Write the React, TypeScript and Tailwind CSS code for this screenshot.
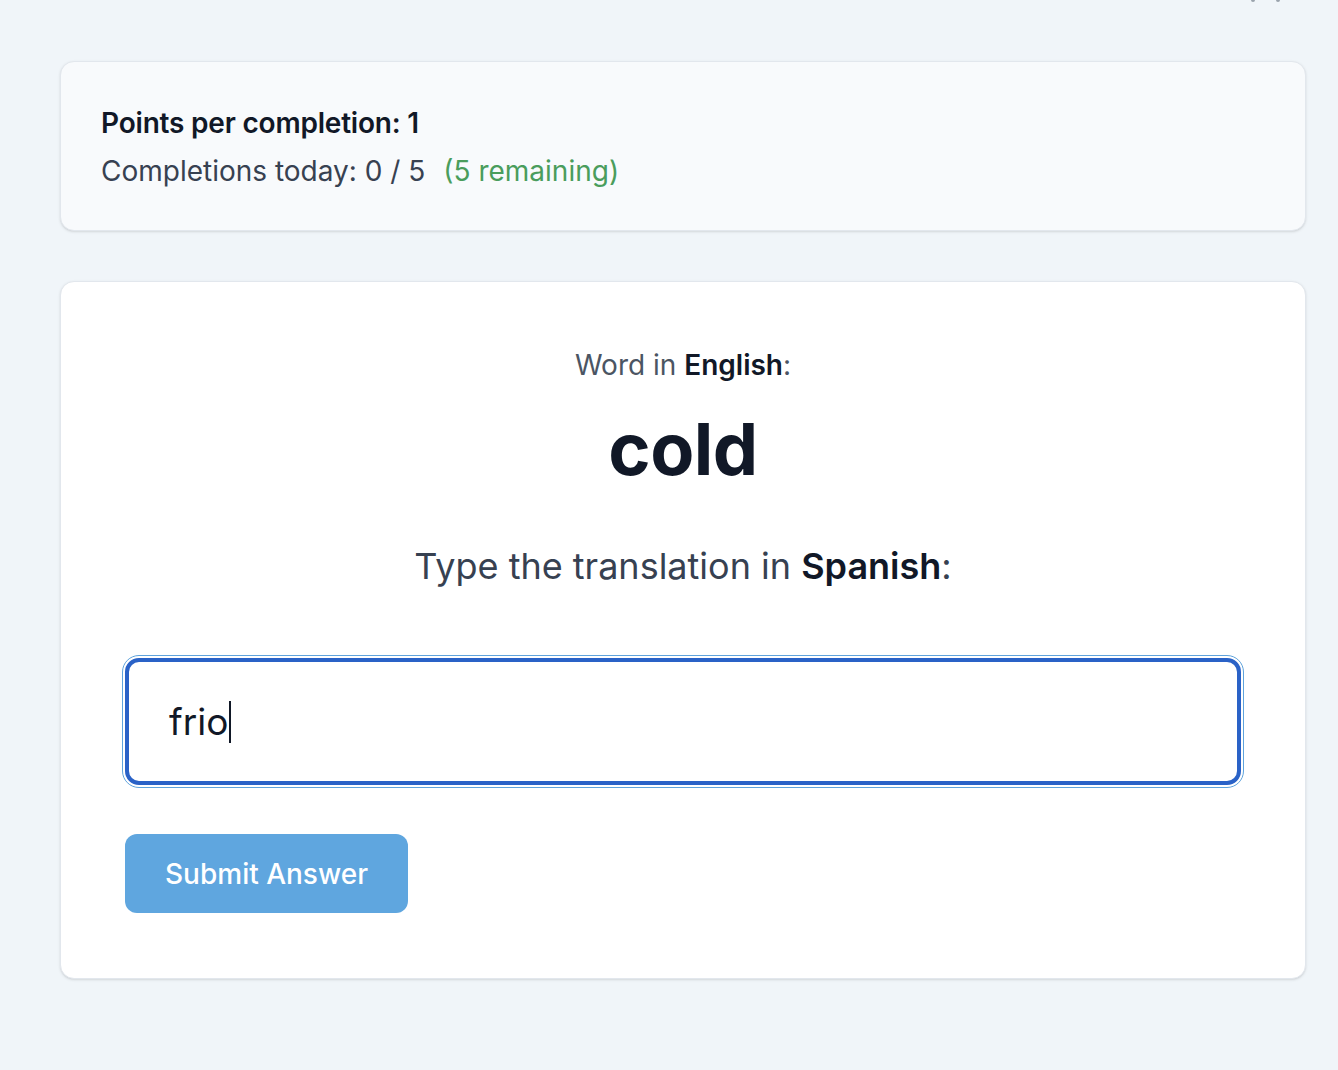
import { useState } from 'react';

export default function App() {
  const [answer] = useState('frio');

  return (
    <div
      className="min-h-screen w-full bg-[#f0f5f9] text-[#111827]"
      style={{ fontFamily: 'Inter, "Noto Sans", Arial, sans-serif' }}
    >
      {/* bits of the header cut off at the top edge */}
      <div className="flex h-[2px] justify-end gap-[21px] pr-[58px]">
        <span className="h-[2px] w-[4px] rounded-b-full bg-[#9aa3ad]" />
        <span className="h-[2px] w-[4px] rounded-b-full bg-[#9aa3ad]" />
      </div>

      <div className="ml-[60px] mr-[32px] flex flex-col gap-[50px] pt-[59px] pb-[60px]">
        {/* Stats card */}
        <div className="rounded-[14px] border border-[#e2e7ed] bg-[#f8fafc] px-10 pt-[41px] pb-[39px] shadow-sm">
          <div className="text-[28px] leading-[40px] font-semibold tracking-[-0.2px] text-[#111827]">
            Points per completion: 1
          </div>
          <div className="mt-2 text-[28px] leading-[40px] text-[#374151]">
            Completions today: 0 / 5
            <span className="ml-[18px] text-[#4a9d5c]">(5 remaining)</span>
          </div>
        </div>

        {/* Exercise card */}
        <div className="rounded-[14px] border border-[#e2e7ed] bg-white px-16 pt-[63px] pb-[65px] shadow-sm">
          <div className="text-center text-[28px] leading-[40px] text-[#4b5563]">
            Word in <span className="font-semibold text-[#111827]">English</span>:
          </div>
          <div className="mt-[28px] text-center text-[72px] leading-[72px] font-bold tracking-[-0.5px] text-[#111827]">
            cold
          </div>
          <div className="mt-[54px] text-center text-[36px] leading-[54px] text-[#374151]">
            Type the translation in <span className="font-semibold text-[#111827]">Spanish</span>:
          </div>

          {/* focused answer field */}
          <div
            role="textbox"
            className="mt-[65px] flex h-[127px] w-full items-center rounded-[14px] border-[4px] border-[#2a62c7] bg-white px-[40px] text-[37px] text-[#111827] outline-1 outline-offset-2 outline-[#5fa3dc] outline-solid"
          >
            {answer}
            <span className="ml-[1px] h-[42px] w-[2px] bg-[#111827]" />
          </div>

          <button className="mt-[49px] h-[79px] w-[283px] rounded-[12px] bg-[#5fa6df] text-[28px] font-medium text-white">
            Submit Answer
          </button>
        </div>
      </div>
    </div>
  );
}
